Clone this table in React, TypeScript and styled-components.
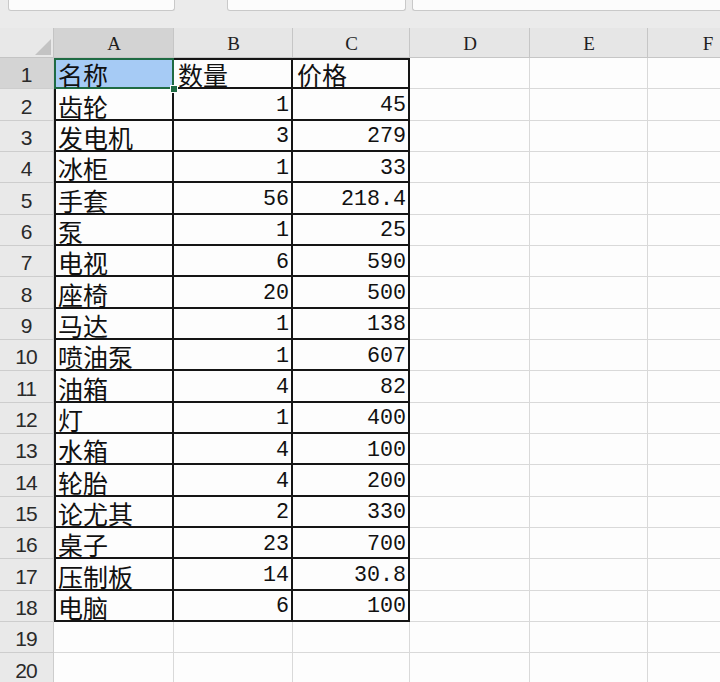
import React from "react";
import styled, { createGlobalStyle, css } from "styled-components";

const Global = createGlobalStyle`
  html, body { margin: 0; padding: 0; background: #ebebeb; }
  body { width: 720px; height: 682px; overflow: hidden; }
  #root { width: 720px; height: 682px; overflow: hidden; }
`;

const Page = styled.div`
  width: 720px;
  height: 682px;
  overflow: hidden;
  background: #ebebeb;
  display: flex;
  flex-direction: column;
`;

const FormulaBar = styled.div`
  height: 28px;
  flex: 0 0 28px;
  display: flex;
  align-items: flex-start;
  padding-left: 8px;
  box-sizing: border-box;
  background: #ebebeb;
`;

const InputBox = styled.div<{ $w?: number; $ml?: number; $grow?: boolean }>`
  height: 11px;
  box-sizing: border-box;
  background: #fcfcfc;
  border: 1px solid #c9c9c9;
  border-top: none;
  border-radius: 0 0 3px 3px;
  margin-left: ${(p) => p.$ml ?? 0}px;
  ${(p) =>
    p.$grow
      ? css`
          flex: 1;
          border-right: none;
          border-radius: 0 0 0 3px;
        `
      : css`
          width: ${p.$w}px;
          flex: 0 0 ${p.$w}px;
        `}
`;

const Sheet = styled.div`
  display: grid;
  grid-template-columns: 54px 120px 119px 117px 120px 118px 120px;
  grid-template-rows: 30px repeat(20, 31.33px);
  width: 768px;
  background: #fdfdfd;
`;

const Corner = styled.div`
  background: #e8e8e8;
  box-shadow: inset -1px -1px 0 #c4c4c4;
  position: relative;
  overflow: hidden;
`;

const CornerTriangle = styled.div`
  position: absolute;
  right: 3px;
  bottom: 3px;
  width: 0;
  height: 0;
  border-left: 16px solid transparent;
  border-bottom: 16px solid #c3c3c3;
`;

const ColHead = styled.div<{ $active?: boolean }>`
  background: ${(p) => (p.$active ? "#d3d3d3" : "#e6e6e6")};
  box-shadow: inset -1px -1px 0 #c6c6c6;
  display: flex;
  align-items: flex-end;
  justify-content: center;
  padding-bottom: 5px;
  box-sizing: border-box;
  font-family: "Liberation Serif", "DejaVu Serif", serif;
  font-size: 19px;
  line-height: 1;
  color: #1f1f1f;
`;

const RowHead = styled.div<{ $active?: boolean }>`
  background: ${(p) => (p.$active ? "#d4d4d4" : "#e9e9e9")};
  box-shadow: inset -1px -1px 0 #cdcdcd;
  display: flex;
  align-items: flex-end;
  justify-content: center;
  padding-bottom: 4px;
  padding-right: 2px;
  box-sizing: border-box;
  font-family: "Liberation Sans", Arial, sans-serif;
  font-size: 21px;
  letter-spacing: -1px;
  line-height: 1;
  color: #2a2a2a;
`;

const Cell = styled.div<{
  $num?: boolean;
  $table?: boolean;
  $leftEdge?: boolean;
  $topEdge?: boolean;
  $selected?: boolean;
}>`
  position: relative;
  display: flex;
  align-items: flex-end;
  justify-content: ${(p) => (p.$num ? "flex-end" : "flex-start")};
  box-sizing: border-box;
  padding: ${(p) => (p.$num ? "0 4px 4px 0" : "0 0 2px 4px")};
  white-space: nowrap;
  line-height: 1;
  color: #111;
  background: ${(p) => (p.$selected ? "#a6cbf5" : "#fdfdfd")};
  font-family: ${(p) =>
    p.$num
      ? `"Liberation Mono", "DejaVu Sans Mono", monospace`
      : `"Noto Sans CJK SC", "Noto Sans", sans-serif`};
  font-size: ${(p) => (p.$num ? "21.7px" : "25px")};
  box-shadow: ${(p) => {
    if (!p.$table) return "inset -1px -1px 0 #d9d9d9";
    const parts = ["inset -2px -2px 0 #151515"];
    if (p.$leftEdge) parts.push("inset 2px 0 0 #151515");
    if (p.$topEdge) parts.push("inset 0 2px 0 #151515");
    return parts.join(", ");
  }};
  ${(p) =>
    p.$selected &&
    css`
      box-shadow: inset 0 0 0 2px #1f6b43;
    `}
`;

const FillHandle = styled.div`
  position: absolute;
  right: -4px;
  bottom: -4px;
  width: 6px;
  height: 6px;
  background: #1f6b43;
  border: 1px solid #fdfdfd;
  z-index: 2;
`;

const data: [string, string, string][] = [
  ["名称", "数量", "价格"],
  ["齿轮", "1", "45"],
  ["发电机", "3", "279"],
  ["冰柜", "1", "33"],
  ["手套", "56", "218.4"],
  ["泵", "1", "25"],
  ["电视", "6", "590"],
  ["座椅", "20", "500"],
  ["马达", "1", "138"],
  ["喷油泵", "1", "607"],
  ["油箱", "4", "82"],
  ["灯", "1", "400"],
  ["水箱", "4", "100"],
  ["轮胎", "4", "200"],
  ["论尤其", "2", "330"],
  ["桌子", "23", "700"],
  ["压制板", "14", "30.8"],
  ["电脑", "6", "100"],
];

const cols = ["A", "B", "C", "D", "E", "F"];

export default function App() {
  const rows: React.ReactNode[] = [];
  for (let r = 1; r <= 20; r++) {
    const rowData = data[r - 1];
    rows.push(
      <RowHead key={`h${r}`} $active={r === 1}>
        {r}
      </RowHead>
    );
    for (let c = 0; c < 6; c++) {
      const inTable = !!rowData && c < 3;
      const text = inTable ? rowData[c] : "";
      const isNum = inTable && r > 1 && c > 0;
      const selected = r === 1 && c === 0;
      rows.push(
        <Cell
          key={`c${r}-${c}`}
          $num={isNum}
          $table={inTable}
          $leftEdge={c === 0}
          $topEdge={r === 1}
          $selected={selected}
        >
          {text}
          {selected && <FillHandle />}
        </Cell>
      );
    }
  }

  return (
    <>
      <Global />
      <Page>
        <FormulaBar>
          <InputBox $w={167} />
          <InputBox $w={179} $ml={52} />
          <InputBox $grow $ml={6} />
        </FormulaBar>
        <Sheet>
          <Corner>
            <CornerTriangle />
          </Corner>
          {cols.map((c, i) => (
            <ColHead key={c} $active={i === 0}>
              {c}
            </ColHead>
          ))}
          {rows}
        </Sheet>
      </Page>
    </>
  );
}
